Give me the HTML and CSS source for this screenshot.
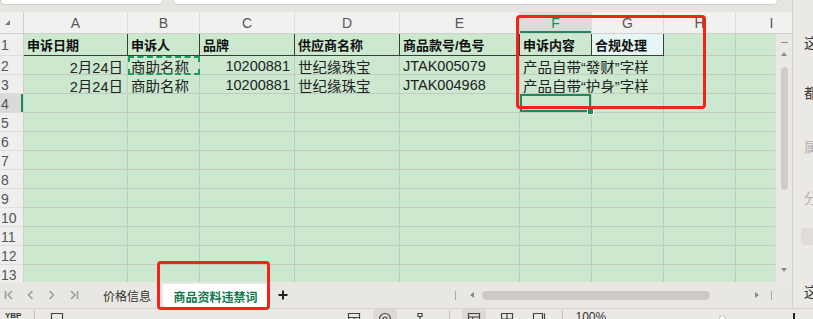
FILE: index.html
```html
<!DOCTYPE html>
<html lang="zh-CN">
  <head>
    <meta charset="UTF-8" />
    <meta name="viewport" content="width=device-width, initial-scale=1.0" />
    <title>商品资料违禁词</title>
    <link rel="stylesheet" href="styles.css">
  </head>
  <body>
    <div class="app">
      <div class="workarea">
        <div class="main">
          <div class="toolbar">
            <div class="namebox"></div>
            <div class="formula"></div>
          </div>

          <div class="sheet">
            <div class="colheads">
              <div class="corner"><span class="corner-mark"></span></div>
              <div>A</div>
              <div>B</div>
              <div>C</div>
              <div>D</div>
              <div>E</div>
              <div class="active">F</div>
              <div>G</div>
              <div>H</div>
              <div>I</div>
            </div>

            <div class="sheet-body">
              <div class="cells">
                <!-- row 1: headers -->
                <div class="rh">1</div>
                <div class="th">申诉日期</div>
                <div class="th">申诉人</div>
                <div class="th">品牌</div>
                <div class="th">供应商名称</div>
                <div class="th">商品款号/色号</div>
                <div class="th">申诉内容</div>
                <div class="th rule">合规处理</div>
                <div></div>
                <div></div>

                <!-- row 2 -->
                <div class="rh">2</div>
                <div class="num">2月24日</div>
                <div class="copy">商助名称</div>
                <div class="num">10200881</div>
                <div>世纪缘珠宝</div>
                <div>JTAK005079</div>
                <div class="merge">产品自带“發财”字样</div>
                <div></div>
                <div></div>

                <!-- row 3 -->
                <div class="rh">3</div>
                <div class="num">2月24日</div>
                <div>商助名称</div>
                <div class="num">10200881</div>
                <div>世纪缘珠宝</div>
                <div>JTAK004968</div>
                <div class="merge">产品自带“护身”字样</div>
                <div></div>
                <div></div>

                <!-- row 4: current cell F4 -->
                <div class="rh sel">4</div>
                <div></div><div></div><div></div><div></div><div></div>
                <div class="current"></div>
                <div></div><div></div><div></div>

                <div class="rh">5</div>
                <div></div><div></div><div></div><div></div><div></div><div></div><div></div><div></div><div></div>
                <div class="rh">6</div>
                <div></div><div></div><div></div><div></div><div></div><div></div><div></div><div></div><div></div>
                <div class="rh">7</div>
                <div></div><div></div><div></div><div></div><div></div><div></div><div></div><div></div><div></div>
                <div class="rh">8</div>
                <div></div><div></div><div></div><div></div><div></div><div></div><div></div><div></div><div></div>
                <div class="rh">9</div>
                <div></div><div></div><div></div><div></div><div></div><div></div><div></div><div></div><div></div>
                <div class="rh">10</div>
                <div></div><div></div><div></div><div></div><div></div><div></div><div></div><div></div><div></div>
                <div class="rh">11</div>
                <div></div><div></div><div></div><div></div><div></div><div></div><div></div><div></div><div></div>
                <div class="rh">12</div>
                <div></div><div></div><div></div><div></div><div></div><div></div><div></div><div></div><div></div>
                <div class="rh">13</div>
                <div></div><div></div><div></div><div></div><div></div><div></div><div></div><div></div><div></div>
              </div>

              <div class="vscroll">
                <span class="vs-min"></span>
                <span class="tri-up"></span>
                <span class="vs-thumb"></span>
                <span class="tri-down"></span>
              </div>
            </div>
          </div>

          <div class="tabbar">
            <div class="tabnav">
              <svg class="nav-first" width="10" height="12" viewBox="0 0 10 12"><path d="M1.5 2v8M8 2L4 6l4 4" /></svg>
              <svg class="nav-prev" width="7" height="12" viewBox="0 0 7 12"><path d="M5.5 2L1.5 6l4 4" /></svg>
              <svg class="nav-next" width="7" height="12" viewBox="0 0 7 12"><path d="M1.5 2l4 4-4 4" /></svg>
              <svg class="nav-last" width="10" height="12" viewBox="0 0 10 12"><path d="M2 2l4 4-4 4M8.5 2v8" /></svg>
            </div>
            <div class="tab">价格信息</div>
            <div class="tab tab-active">商品资料违禁词</div>
            <svg class="tab-add" width="10" height="10" viewBox="0 0 10 10"><path d="M5 0.5v9M0.5 5h9" /></svg>

            <div class="hscroll">
              <span class="hs-bar"></span>
              <span class="tri-left"></span>
              <span class="hs-thumb"></span>
              <span class="tri-right"></span>
              <span class="hs-bar hs-end"></span>
            </div>
          </div>
        </div>

        <div class="side">
          <span class="side-char">这</span>
          <span class="side-char c2">都</span>
          <span class="side-char c3 faded">属</span>
          <span class="side-char c4 faded">分</span>
          <span class="side-box"></span>
          <span class="side-char c5">这</span>
        </div>
      </div>

      <div class="statusbar">
        <span class="st-text">YBP</span>
        <span class="st-div"></span>
        <svg class="st-icon st-page" width="14" height="14" viewBox="0 0 14 14"><path d="M1.5 1.5h11v11h-11z" /></svg>
        <svg class="st-icon st-grid" width="14" height="14" viewBox="0 0 14 14"><path d="M1.5 1.5h11v11h-11zM1.5 5.5h11M7 5.5v7" /></svg>
        <span class="st-btn"><svg class="st-icon" width="14" height="14" viewBox="0 0 14 14"><circle cx="7" cy="7" r="5.5" /><circle cx="7" cy="7" r="2" /></svg></span>
        <svg class="st-icon st-share" width="14" height="14" viewBox="0 0 14 14"><path d="M5 1.5h4v3H5zM7 4.5v3M2 7.5h10M2 7.5v4M12 7.5v4" /></svg>
        <span class="st-div st-div2"></span>
        <span class="st-btn st-btn2"><svg class="st-icon" width="14" height="14" viewBox="0 0 14 14"><path d="M1.5 1.5h11v11h-11zM1.5 5h11M5.5 5v7.5" /></svg></span>
        <svg class="st-icon st-split" width="14" height="14" viewBox="0 0 14 14"><path d="M1.5 1.5h11v11h-11zM7 1.5v11M1.5 7h11" /></svg>
        <svg class="st-icon st-read" width="14" height="14" viewBox="0 0 14 14"><path d="M1.5 1.5h9v11h-9zM12.5 1.5v8" /></svg>
        <span class="st-div st-div3"></span>
        <span class="st-zoom">100%</span>
        <span class="st-knob"></span>
        <span class="st-end"></span>
      </div>

      <!-- red annotation frames -->
      <div class="mark mark-cols"></div>
      <div class="mark mark-tab"></div>
    </div>
  </body>
</html>
```

FILE: styles.css
```css
:root {
  --cell-bg: #cce8cf;
  --grid-line: #c3cac4;
  --head-bg: #f1f1f0;
  --chrome-bg: #e9e7e4;
  --accent: #1b8c59;
  --mark: #f3231b;
}

* {
  box-sizing: border-box;
  margin: 0;
  padding: 0;
}

body {
  width: 813px;
  height: 319px;
  overflow: hidden;
  font-family: "Liberation Sans", "Noto Sans CJK SC", sans-serif;
  color: #222;
  background-color: var(--chrome-bg);
}

.app {
  position: relative;
  width: 813px;
  height: 319px;
  display: flex;
  flex-direction: column;
}

.workarea {
  display: flex;
  height: 308px;
}

.main {
  width: 792px;
  display: flex;
  flex-direction: column;
}

/* formula bar, only its lower edge is visible */
.toolbar {
  height: 12px;
  display: flex;
  align-items: flex-start;
  background-color: #e7e5e2;
}

.namebox,
.formula {
  height: 5px;
  background-color: #fff;
  border: 1px solid #cfccc9;
  border-top: none;
  border-radius: 0 0 5px 5px;
}

.namebox {
  width: 163px;
}

.formula {
  width: 605px;
  margin-left: 10px;
}

/* sheet */
.sheet {
  height: 270px;
  display: flex;
  flex-direction: column;
}

.colheads,
.cells {
  display: grid;
  grid-template-columns: 24px 104px 72px 95px 105px 120px 72px 72px 72px 72px;
}

.colheads {
  height: 22px;
  overflow: hidden;
  background-color: var(--head-bg);
  border-bottom: 1px solid #d0d0d0;
  font-size: 14px;
  color: #555;
}

.colheads > div {
  display: flex;
  align-items: center;
  justify-content: center;
  border-right: 1px solid #dcdcdc;
}

.colheads > .active {
  background-color: #dcdcdc;
  color: var(--accent);
  box-shadow: inset 0 -2px 0 var(--accent);
}

.colheads > .corner {
  align-items: flex-end;
  justify-content: flex-start;
  padding: 0 0 8px 5px;
  border-right-color: #cfcfcf;
}

.corner-mark {
  width: 0;
  height: 0;
  border-left: 5px solid transparent;
  border-bottom: 5px solid #7a7a7a;
}

.sheet-body {
  flex: 1;
  display: flex;
  min-height: 0;
}

.cells {
  width: 775px;
  overflow: hidden;
  grid-template-rows: 22px;
  grid-auto-rows: 19px;
  align-content: start;
  font-size: 14.5px;
}

.cells > div {
  display: flex;
  align-items: center;
  padding: 2px 3px 0;
  white-space: nowrap;
  overflow: hidden;
  background-color: var(--cell-bg);
  border-right: 1px solid var(--grid-line);
  border-bottom: 1px solid var(--grid-line);
}

.cells > .rh {
  padding: 1px 0 0 1px;
  font-size: 14px;
  color: #555;
  background-color: #efefef;
  border-right-color: #cfcfcf;
  border-bottom-color: #dddddd;
}

.cells > .rh.sel {
  background-color: #dadada;
  box-shadow: inset -2px 0 0 var(--accent);
}

.cells > .th {
  padding-top: 0;
  font-size: 13px;
  font-weight: 700;
  color: #111;
  border-right-color: #3c3c3c;
  border-bottom-color: #3c3c3c;
}

.cells > .rule {
  background-color: #e5f6f4;
}

.cells > .num {
  justify-content: flex-end;
  padding-right: 4px;
}

.cells > .merge {
  grid-column: span 2;
}

.cells > .copy {
  outline: 2px dashed #1f9a60;
  outline-offset: -2px;
}

.cells > .current {
  position: relative;
  overflow: visible;
  box-shadow: inset 0 0 0 2px var(--accent);
}

.current::after {
  content: "";
  position: absolute;
  right: -3px;
  bottom: -3px;
  width: 5px;
  height: 5px;
  background-color: var(--accent);
  border: 1px solid #fff;
}

/* vertical scrollbar */
.vscroll {
  width: 17px;
  display: flex;
  flex-direction: column;
  align-items: center;
  background-color: #ebe9e6;
  border-left: 1px solid #dedbd8;
}

.vs-min {
  width: 7px;
  height: 1px;
  margin-top: 8px;
  background-color: #8c8c8c;
}

.tri-up,
.tri-down {
  width: 0;
  height: 0;
  border-left: 3px solid transparent;
  border-right: 3px solid transparent;
}

.tri-up {
  margin-top: 9px;
  border-bottom: 4px solid #8a8a8a;
}

.tri-down {
  margin-top: auto;
  margin-bottom: 10px;
  border-top: 4px solid #8a8a8a;
}

.vs-thumb {
  width: 7px;
  height: 123px;
  margin-top: 11px;
  border-radius: 4px;
  background-color: #d0ccc8;
}

/* sheet tabs */
.tabbar {
  height: 26px;
  display: flex;
  align-items: center;
  background-color: var(--chrome-bg);
}

.tabnav {
  display: flex;
  align-items: center;
  padding-left: 4px;
}

.tabnav svg {
  fill: none;
  stroke: #9d9d9d;
  stroke-width: 1.6;
}

.nav-prev {
  margin-left: 13px;
}

.nav-next {
  margin-left: 14px;
}

.nav-last {
  margin-left: 14px;
}

.tab {
  margin-left: 24px;
  font-size: 12px;
  color: #333;
  white-space: nowrap;
}

.tab-active {
  align-self: stretch;
  display: flex;
  align-items: center;
  justify-content: center;
  flex: none;
  width: 105px;
  margin-top: 2px;
  margin-left: 12px;
  font-weight: 700;
  color: #0f7a4c;
  background-color: #fff;
  border-radius: 0 0 6px 6px;
}

.tab-add {
  flex: none;
  margin-left: 10px;
  fill: none;
  stroke: #222;
  stroke-width: 2;
}

.hscroll {
  margin-left: auto;
  width: 337px;
  height: 100%;
  display: flex;
  align-items: center;
}

.hs-bar {
  width: 1px;
  height: 9px;
  background-color: #a9a9a9;
}

.hs-end {
  margin-left: 12px;
}

.tri-left,
.tri-right {
  width: 0;
  height: 0;
  border-top: 3px solid transparent;
  border-bottom: 3px solid transparent;
}

.tri-left {
  margin-left: 14px;
  border-right: 4px solid #8a8a8a;
}

.tri-right {
  margin-left: 45px;
  border-left: 4px solid #8a8a8a;
}

.hs-thumb {
  width: 228px;
  height: 9px;
  margin-left: 8px;
  border-radius: 5px;
  background-color: #cdcac6;
}

/* task pane edge on the right */
.side {
  width: 21px;
  display: flex;
  flex-direction: column;
  overflow: hidden;
  padding-left: 11px;
  background-color: #ebe9e6;
  border-left: 1px solid #d3d0cd;
  font-size: 14px;
  line-height: 16px;
  color: #333;
}

.side-char {
  margin-top: 35px;
  white-space: nowrap;
}

.side-char.c2 {
  margin-top: 34px;
}

.side-char.c3 {
  margin-top: 38px;
}

.side-char.c4 {
  margin-top: 35px;
}

.side-char.c5 {
  margin-top: 39px;
}

.side-char.faded {
  color: #b3afab;
}

.side-box {
  flex: none;
  width: 20px;
  height: 17px;
  margin: 22px 0 0 -3px;
  border-radius: 4px;
  background-color: #dfdcd9;
}

/* status bar, cut by the window edge */
.statusbar {
  height: 11px;
  display: flex;
  align-items: flex-start;
  overflow: hidden;
  background-color: #ebe9e6;
  border-top: 1px solid #d6d3d0;
}

.st-text {
  margin: 2px 0 0 5px;
  font-size: 8px;
  font-weight: 700;
  line-height: 10px;
  color: #333;
}

.st-div {
  width: 1px;
  height: 10px;
  margin: 1px 0 0 13px;
  background-color: #c4c1be;
}

.st-icon {
  flex: none;
  fill: none;
  stroke: #444;
  stroke-width: 1.2;
}

.st-page {
  margin: 3px 0 0 15px;
}

.st-grid {
  margin: 3px 0 0 283px;
}

.st-btn {
  display: flex;
  justify-content: center;
  width: 24px;
  height: 16px;
  margin-left: 12px;
  padding-top: 3px;
  border-radius: 4px;
  background-color: #dcd9d6;
}

.st-share {
  margin: 3px 0 0 16px;
}

.st-div2 {
  margin-left: 22px;
}

.st-btn2 {
  margin-left: 12px;
}

.st-split {
  margin: 3px 0 0 14px;
}

.st-read {
  margin: 3px 0 0 18px;
}

.st-div3 {
  margin-left: 16px;
}

.st-zoom {
  margin: 1px 0 0 12px;
  font-size: 12px;
  line-height: 14px;
  color: #333;
}

.st-knob {
  width: 7px;
  height: 7px;
  margin: 6px 0 0 113px;
  border-radius: 50%;
  background-color: #fff;
  border: 1px solid #bbb;
}

.st-end {
  width: 2px;
  height: 10px;
  margin: 4px 0 0 67px;
  background-color: #222;
}

/* red annotation frames drawn over the screen */
.mark {
  position: absolute;
  border: 3px solid var(--mark);
  border-radius: 4px;
  pointer-events: none;
}

.mark-cols {
  left: 516px;
  top: 15px;
  width: 190px;
  height: 94px;
}

.mark-tab {
  left: 157px;
  top: 261px;
  width: 113px;
  height: 49px;
}
```
